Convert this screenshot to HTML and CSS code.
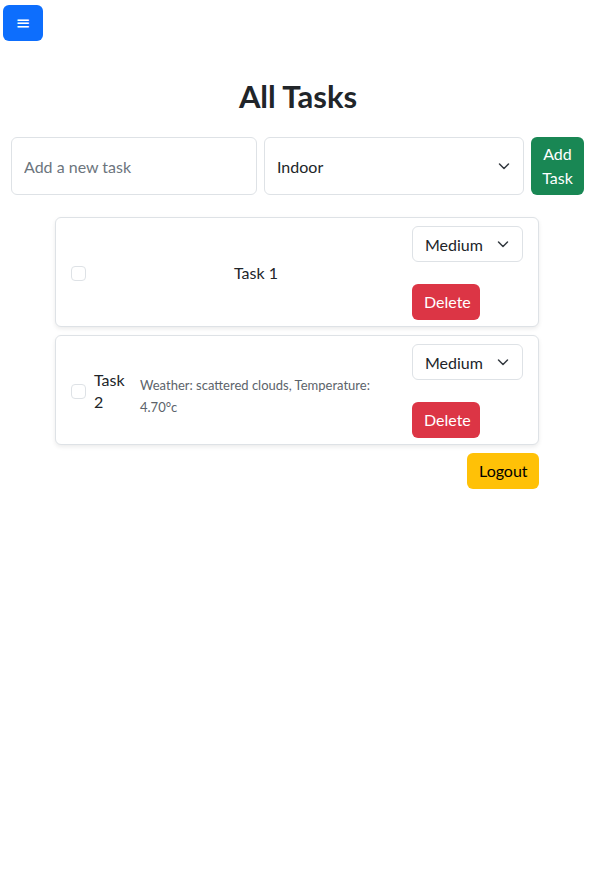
FILE: index.html
```html
<!DOCTYPE html>
<html lang="en">
<head>
<meta charset="utf-8">
<title>All Tasks</title>
<link rel="stylesheet" href="styles.css">
</head>
<body>
<header class="topbar">
  <button class="menu-btn" type="button">≡</button>
</header>
<main>
  <h1 class="title">All Tasks</h1>
  <form class="add-form">
    <input class="field task-input" type="text" placeholder="Add a new task">
    <span class="select-wrap type-select">
      <select class="field select"><option>Indoor</option><option>Outdoor</option></select>
      <svg class="chev" viewBox="0 0 16 16" width="16" height="16"><path d="M3.5 6l4.5 4.5 4.5-4.5" fill="none" stroke="#343a40" stroke-width="1.5" stroke-linecap="round" stroke-linejoin="round"/></svg>
    </span>
    <button class="btn btn-green add-btn" type="button">Add Task</button>
  </form>

  <section class="tasks">
    <div class="card">
      <span class="check"></span>
      <span class="task-name task-name-center">Task 1</span>
      <div class="actions">
        <span class="select-wrap prio-select">
          <select class="field select small-select"><option>Medium</option><option>High</option><option>Low</option></select>
          <svg class="chev" viewBox="0 0 16 16" width="16" height="16"><path d="M3.5 6l4.5 4.5 4.5-4.5" fill="none" stroke="#343a40" stroke-width="1.5" stroke-linecap="round" stroke-linejoin="round"/></svg>
        </span>
        <button class="btn btn-red" type="button">Delete</button>
      </div>
    </div>

    <div class="card">
      <span class="check"></span>
      <span class="task-name task-name-narrow">Task 2</span>
      <span class="weather">Weather: scattered clouds, Temperature: 4.70°c</span>
      <div class="actions">
        <span class="select-wrap prio-select">
          <select class="field select small-select"><option>Medium</option><option>High</option><option>Low</option></select>
          <svg class="chev" viewBox="0 0 16 16" width="16" height="16"><path d="M3.5 6l4.5 4.5 4.5-4.5" fill="none" stroke="#343a40" stroke-width="1.5" stroke-linecap="round" stroke-linejoin="round"/></svg>
        </span>
        <button class="btn btn-red" type="button">Delete</button>
      </div>
    </div>

    <div class="logout-row">
      <button class="btn btn-yellow" type="button">Logout</button>
    </div>
  </section>
</main>
</body>
</html>
```
FILE: styles.css
```css
* { box-sizing: border-box; }

body {
  margin: 0;
  font-family: Lato, "Noto Sans", sans-serif;
  font-size: 16px;
  line-height: 1.5;
  color: #212529;
  background: #fff;
}

.topbar {
  padding: 5px 3px 0;
}

.menu-btn {
  width: 40px;
  height: 36px;
  border: none;
  border-radius: 6px;
  background: #0d6efd;
  color: #fff;
  font-family: "DejaVu Sans", sans-serif;
  font-size: 18px;
  font-weight: 400;
  line-height: 1;
  padding: 0;
}

.title {
  margin: 37px 0 22px;
  text-align: center;
  font-size: 31px;
  font-weight: 700;
  line-height: 1.2;
}

.add-form {
  display: flex;
  gap: 7px;
  padding: 0 12px 0 11px;
  height: 58px;
}

.field {
  font-family: inherit;
  font-size: 16px;
  color: #212529;
  background: #fff;
  border: 1px solid #dee2e6;
  border-radius: 6px;
  padding: 6px 12px;
}

.task-input {
  width: 246px;
  height: 58px;
}

.task-input::placeholder { color: #6c757d; }

.select-wrap {
  position: relative;
  display: inline-block;
}

.select {
  appearance: none;
  -webkit-appearance: none;
  width: 100%;
  height: 100%;
}

.chev {
  position: absolute;
  right: 12px;
  top: 50%;
  margin-top: -8px;
  pointer-events: none;
}

.type-select {
  width: 260px;
  height: 58px;
}

.btn {
  font-family: inherit;
  font-size: 16px;
  line-height: 24px;
  border: none;
  border-radius: 6px;
  padding: 6px 12px;
  color: #fff;
}

.btn-green {
  background: #198754;
}

.add-btn {
  width: 53px;
  height: 58px;
  padding: 5px 8px;
}

.btn-red {
  background: #dc3545;
  width: 68px;
  height: 36px;
}

.btn-yellow {
  background: #ffc107;
  color: #000;
  width: 72px;
  height: 36px;
}

.tasks {
  width: 484px;
  margin: 22px 0 0 55px;
  display: flex;
  flex-direction: column;
  gap: 8px;
}

.card {
  display: flex;
  align-items: center;
  min-height: 110px;
  padding: 8px 15px 6px 15px;
  border: 1px solid #dee2e6;
  border-radius: 6px;
  box-shadow: 0 2px 4px rgba(0, 0, 0, 0.08);
  background: #fff;
}

.check {
  flex: none;
  width: 15px;
  height: 15px;
  border: 1px solid #dee2e6;
  border-radius: 4px;
  background: #fff;
  margin-right: 8px;
}

.task-name {
  line-height: 22px;
}

.task-name-center {
  flex: 1;
  text-align: center;
  padding-left: 6px;
}

.task-name-narrow {
  width: 28px;
  flex: none;
  margin-top: 0;
}

.weather {
  flex: 1;
  margin: 10px 24px 0 18px;
  font-size: 13px;
  line-height: 22px;
  color: #5c636a;
}

.actions {
  flex: none;
  width: 111px;
  display: flex;
  flex-direction: column;
  align-items: flex-start;
  gap: 22px;
}

.prio-select {
  width: 111px;
  height: 36px;
}

.logout-row {
  display: flex;
  justify-content: flex-end;
}
```
